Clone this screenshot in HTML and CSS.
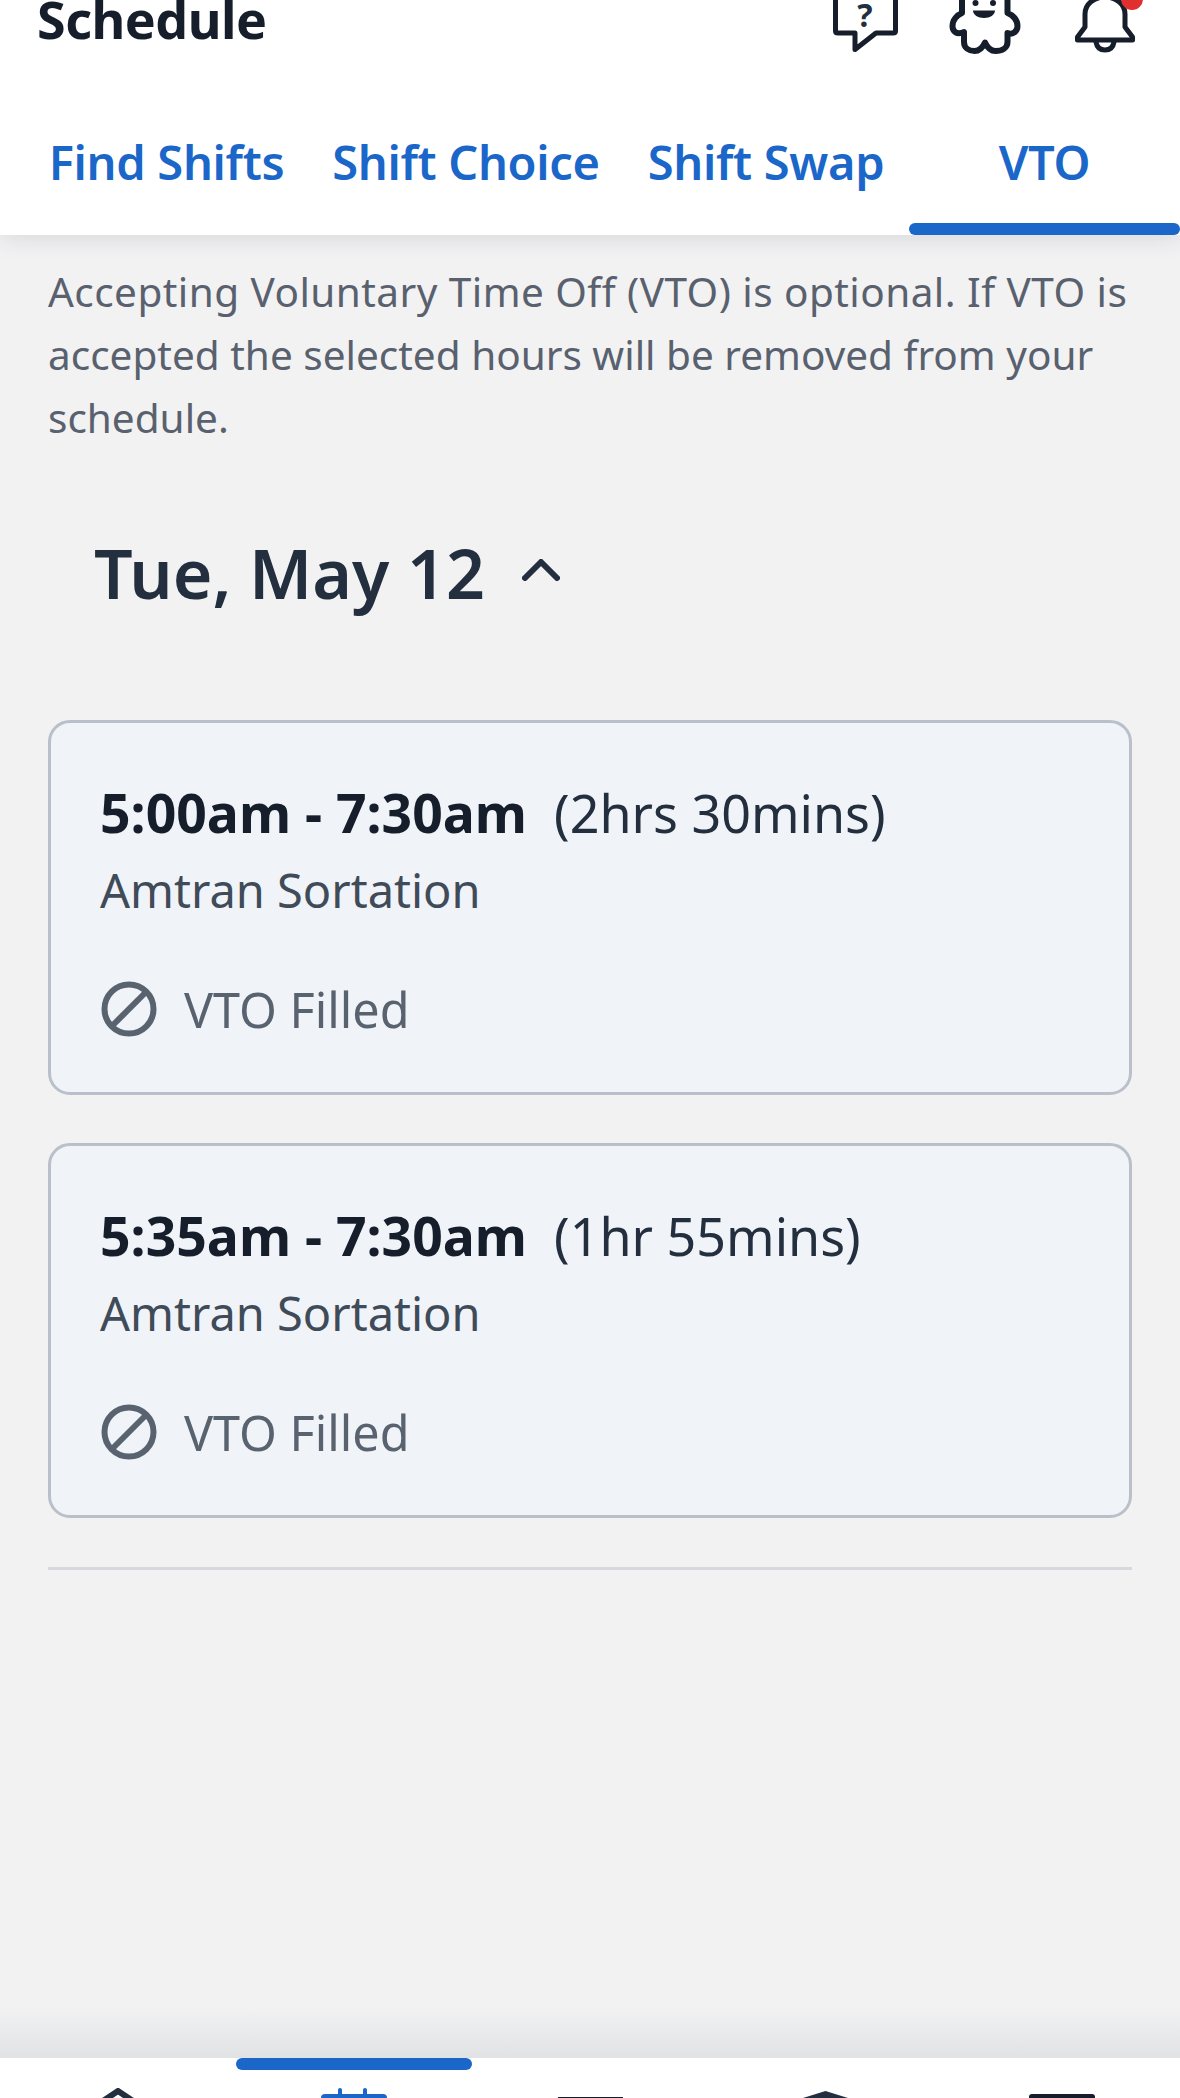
FILE: index.html
```html
<!DOCTYPE html>
<html lang="en">
<head>
  <meta charset="UTF-8" />
  <meta name="viewport" content="width=device-width, initial-scale=1.0"/>
  <title>Schedule</title>
  <link rel="stylesheet" href="styles.css">
</head>
<body>
  <div class="page">
    <header class="header">
      <div class="top-bar">
        <h1 class="page-title">Schedule</h1>
        <div class="top-icons">
          <svg class="icon-help" viewBox="0 0 74 56">
            <path class="icon-line" d="M6.5 -6V31Q6.5 33 9 33H26V49.500L47 33H64Q66.500 33 66.500 31V-6"/>
            <text class="help-mark" x="36" y="27">?</text>
          </svg>
          <svg class="icon-mascot" viewBox="0 0 80 56">
            <path class="icon-line icon-thick" d="M17 -6V13C12 15 7.500 20 7.500 26C7.500 32 12 35 19 32V42C19 48 24 51 29.500 51C35 51 38 47 40 42.500C42 47 45 51 50.500 51C57 51 62.500 48 62.500 42V33C67 35 72.500 32 72.500 26C72.500 20 68 15 62.500 13V-6"/>
            <circle class="icon-fill" cx="30.500" cy="3" r="3"/>
            <circle class="icon-fill" cx="48" cy="3" r="3"/>
            <path class="icon-fill" d="M28 10.500H50C50 15 45 18 39 18C33 18 28 15 28 10.500Z"/>
          </svg>
          <svg class="icon-bell" viewBox="0 0 76 56">
            <path class="icon-line" d="M7.500 40H62.500V37L55 27V14C55 4 46 -3 35 -3C24 -3 15 4 15 14V27L7.500 37Z"/>
            <path class="icon-line" d="M26 42C27 48 31 50 35 50C39 50 43 48 44 42"/>
            <circle class="bell-dot" cx="62" cy="-1" r="11"/>
          </svg>
        </div>
      </div>
      <nav class="tabs">
        <a class="tab">Find Shifts</a>
        <a class="tab">Shift Choice</a>
        <a class="tab">Shift Swap</a>
        <a class="tab tab-active">VTO</a>
      </nav>
    </header>

    <main class="content">
      <p class="intro"><span class="intro-lead">Accepting Voluntary Time Off (VTO) is optional. If VTO is</span> accepted the selected hours will be removed from your schedule.</p>

      <h2 class="day-title">
        Tue, May 12
        <svg class="chevron" viewBox="0 0 38 22">
          <path d="M3 19L19 3L35 19"/>
        </svg>
      </h2>

      <div class="vto-card">
        <div class="vto-time"><b>5:00am - 7:30am</b><span>(2hrs 30mins)</span></div>
        <div class="vto-place">Amtran Sortation</div>
        <div class="vto-status">
          <svg class="icon-blocked" viewBox="0 0 56 56">
            <circle cx="28" cy="28" r="24.500"/>
            <path d="M11 45L45 11"/>
          </svg>
          VTO Filled
        </div>
      </div>

      <div class="vto-card">
        <div class="vto-time"><b>5:35am - 7:30am</b><span>(1hr 55mins)</span></div>
        <div class="vto-place">Amtran Sortation</div>
        <div class="vto-status">
          <svg class="icon-blocked" viewBox="0 0 56 56">
            <circle cx="28" cy="28" r="24.500"/>
            <path d="M11 45L45 11"/>
          </svg>
          VTO Filled
        </div>
      </div>

      <hr class="divider">
    </main>

    <footer class="bottom-nav">
      <div class="nav-item">
        <svg viewBox="0 0 80 10"><path class="nav-dark" d="M25 13L40 3L55 13" /></svg>
      </div>
      <div class="nav-item nav-active">
        <svg viewBox="0 0 80 10">
          <rect class="nav-blue" x="7" y="6" width="66" height="12" rx="4"/>
          <rect class="nav-blue" x="24" y="0" width="4" height="8" rx="2"/>
          <rect class="nav-blue" x="49" y="0" width="4" height="8" rx="2"/>
        </svg>
      </div>
      <div class="nav-item">
        <svg viewBox="0 0 80 10"><rect class="nav-ink" x="8" y="9" width="65" height="3"/></svg>
      </div>
      <div class="nav-item">
        <svg viewBox="0 0 80 10"><path class="nav-solid" d="M17 10L39.500 3L62 10V14H17Z"/></svg>
      </div>
      <div class="nav-item">
        <svg viewBox="0 0 80 10"><rect class="nav-ink" x="7" y="6" width="66" height="12" rx="3"/></svg>
      </div>
    </footer>
  </div>
</body>
</html>
```

FILE: styles.css
```css
* {
  box-sizing: border-box;
}

body {
  margin: 0;
  font-family: "Noto Sans", sans-serif;
  background: #f2f2f3;
}

.page {
  display: flex;
  flex-direction: column;
  height: 2098px;
  overflow: hidden;
}

.header {
  position: relative;
  z-index: 1;
  background: white;
  box-shadow: 0 4px 22px rgba(40, 50, 60, 0.12);
}

.top-bar {
  display: flex;
  justify-content: space-between;
  align-items: flex-end;
  height: 56px;
  padding: 0 34px 0 37px;
  overflow: hidden;
}

.page-title {
  margin: 0 0 9px;
  font-size: 52px;
  line-height: 56px;
  font-weight: 700;
  color: #161d2b;
  letter-spacing: -0.5px;
}

.top-icons {
  display: flex;
  gap: 43px;
}

.top-icons svg {
  display: block;
  height: 56px;
  overflow: visible;
}

.icon-help {
  width: 74px;
  margin-right: -1px;
}

.icon-mascot {
  width: 80px;
}

.icon-bell {
  width: 76px;
  margin-left: 2px;
}

.icon-line {
  fill: none;
  stroke: #161d2b;
  stroke-width: 5px;
  stroke-linejoin: round;
  stroke-linecap: round;
}

.icon-thick {
  stroke-width: 6px;
}

.icon-fill {
  fill: #161d2b;
}

.help-mark {
  font-size: 32px;
  font-weight: 700;
  fill: #232f3e;
  text-anchor: middle;
}

.bell-dot {
  fill: #e02f2f;
}

.tabs {
  display: grid;
  grid-template-columns: 285px 314px 286px 271px;
  height: 179px;
  padding-left: 24px;
}

.tab {
  position: relative;
  display: flex;
  justify-content: center;
  padding-top: 76px;
  font-size: 47px;
  line-height: 60px;
  font-weight: 600;
  color: #1a66c9;
  letter-spacing: -0.3px;
}

.tab-active::after {
  content: "";
  position: absolute;
  left: 0;
  right: 0;
  bottom: 0;
  height: 12px;
  background: #1a66c9;
  border-radius: 6px;
}

.content {
  flex: 1;
  padding: 25px 48px 0;
  background: linear-gradient(to bottom, #f2f2f3 calc(100% - 50px), #e0e2e3);
}

.intro {
  margin: 0;
  font-size: 40.5px;
  line-height: 63px;
  color: #59616e;
}

.intro-lead {
  letter-spacing: 0.45px;
}

.day-title {
  display: flex;
  align-items: center;
  gap: 37px;
  margin: 79px 0 0 46px;
  font-size: 68px;
  line-height: 90px;
  font-weight: 600;
  color: #232f3e;
}

.chevron {
  width: 38px;
  height: 22px;
  margin-top: -6px;
}

.chevron path {
  fill: none;
  stroke: #232f3e;
  stroke-width: 6px;
  stroke-linecap: round;
  stroke-linejoin: round;
}

.vto-card {
  height: 375px;
  margin-top: 48px;
  padding: 55px 48px 0 49px;
  background: #f0f3f7;
  border: 3px solid #b9c0c9;
  border-radius: 22px;
}

.day-title + .vto-card {
  margin-top: 102px;
}

.vto-time {
  display: flex;
  gap: 27px;
  font-size: 52px;
  line-height: 70px;
  color: #232f3e;
}

.vto-time b {
  font-size: 53.5px;
  color: #161d2b;
  font-weight: 700;
}

.vto-place {
  margin-top: 10px;
  font-size: 47px;
  line-height: 64px;
  color: #3f4b59;
}

.vto-status {
  display: flex;
  align-items: center;
  gap: 27px;
  margin-top: 57px;
  padding-left: 1px;
  font-size: 48.5px;
  line-height: 60px;
  color: #59636f;
}

.icon-blocked {
  width: 56px;
  height: 56px;
}

.icon-blocked circle,
.icon-blocked path {
  fill: none;
  stroke: #59636f;
  stroke-width: 6px;
}

.divider {
  margin: 49px 0 0;
  border: none;
  border-top: 3px solid #d6d9dd;
}

.bottom-nav {
  position: relative;
  display: grid;
  grid-template-columns: repeat(5, 236px);
  height: 40px;
  background: white;
}

.nav-item {
  display: flex;
  justify-content: center;
  align-items: flex-end;
}

.nav-item svg {
  display: block;
  width: 80px;
  height: 10px;
}

.nav-active::before {
  content: "";
  position: absolute;
  top: 0;
  left: 236px;
  width: 236px;
  height: 12px;
  background: #1a66c9;
  border-radius: 6px;
}

.nav-dark {
  fill: none;
  stroke: #232f3e;
  stroke-width: 6px;
}

.nav-blue {
  fill: #1a66c9;
}

.nav-ink {
  fill: #161d2b;
}

.nav-solid {
  fill: #232f3e;
}
```
